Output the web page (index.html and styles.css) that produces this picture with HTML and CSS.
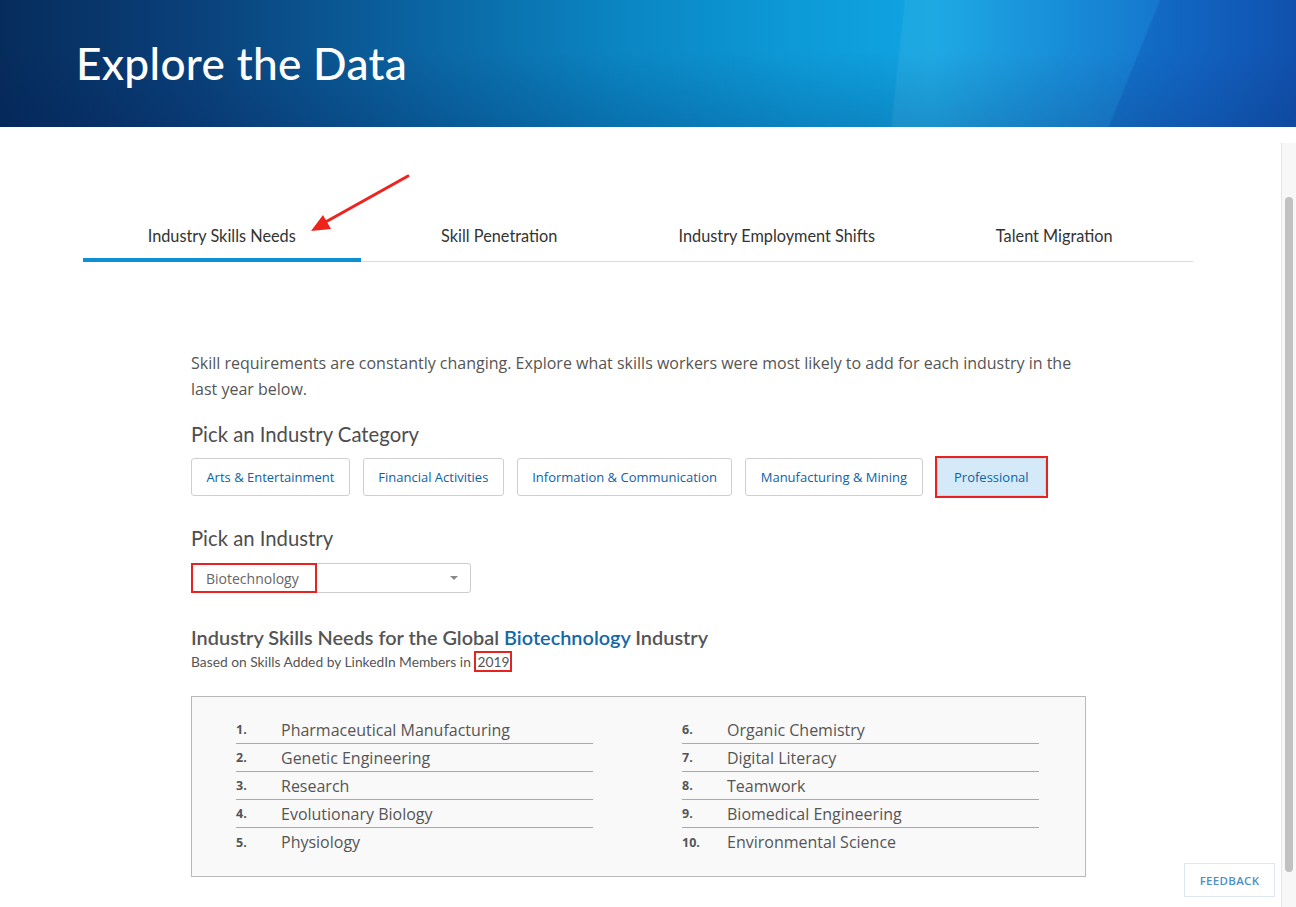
FILE: index.html
```html
<!DOCTYPE html>
<html lang="en">
<head>
<meta charset="utf-8">
<title>Explore the Data</title>
<link rel="stylesheet" href="styles.css">
</head>
<body>
<header class="hero">
  <h1 class="hero-title">Explore the Data</h1>
</header>

<main class="page">
  <nav class="tabs">
    <div class="tab active">Industry Skills Needs</div>
    <div class="tab">Skill Penetration</div>
    <div class="tab">Industry Employment Shifts</div>
    <div class="tab">Talent Migration</div>
  </nav>

  <section class="content">
    <p class="intro">Skill requirements are constantly changing. Explore what skills workers were most likely to add for each industry in the last year below.</p>

    <h2 class="label">Pick an Industry Category</h2>
    <div class="cats">
      <button class="cat">Arts &amp; Entertainment</button>
      <button class="cat">Financial Activities</button>
      <button class="cat">Information &amp; Communication</button>
      <button class="cat">Manufacturing &amp; Mining</button>
      <span class="mark"><button class="cat selected">Professional</button></span>
    </div>

    <h2 class="label label-industry">Pick an Industry</h2>
    <div class="select">
      <span class="select-value">Biotechnology</span>
      <span class="caret"></span>
    </div>

    <h3 class="result-title">Industry Skills Needs for the Global <span class="accent">Biotechnology</span> Industry</h3>
    <div class="result-sub">Based on Skills Added by LinkedIn Members in <span class="boxed">2019</span></div>

    <div class="skills">
      <ol class="skill-list">
        <li><span class="num">1.</span><span class="name">Pharmaceutical Manufacturing</span></li>
        <li><span class="num">2.</span><span class="name">Genetic Engineering</span></li>
        <li><span class="num">3.</span><span class="name">Research</span></li>
        <li><span class="num">4.</span><span class="name">Evolutionary Biology</span></li>
        <li><span class="num">5.</span><span class="name">Physiology</span></li>
      </ol>
      <ol class="skill-list">
        <li><span class="num">6.</span><span class="name">Organic Chemistry</span></li>
        <li><span class="num">7.</span><span class="name">Digital Literacy</span></li>
        <li><span class="num">8.</span><span class="name">Teamwork</span></li>
        <li><span class="num">9.</span><span class="name">Biomedical Engineering</span></li>
        <li><span class="num">10.</span><span class="name">Environmental Science</span></li>
      </ol>
    </div>
  </section>
</main>

<svg class="arrow" width="1296" height="907" viewBox="0 0 1296 907" aria-hidden="true">
  <line x1="408" y1="176" x2="322" y2="224" stroke="#f0231c" stroke-width="3" stroke-linecap="round"/>
  <polygon points="311,231 331,229 323,215" fill="#f0231c"/>
</svg>

<div class="scrollbar"><div class="thumb"></div></div>
<button class="feedback">FEEDBACK</button>
</body>
</html>
```

FILE: styles.css
```css
* { box-sizing: border-box; }

html, body {
  margin: 0;
  padding: 0;
  width: 1296px;
  height: 907px;
  overflow: hidden;
  background: #ffffff;
}

body {
  font-family: "Open Sans", "Liberation Sans", sans-serif;
  color: #555;
  position: relative;
}

.hero {
  height: 127px;
  display: flex;
  align-items: center;
  padding-left: 76px;
  background:
    linear-gradient(112deg, rgba(255,255,255,0) 0%, rgba(255,255,255,0) 86%, rgba(0,40,150,0.18) 86.2%, rgba(0,40,150,0.18) 100%),
    linear-gradient(96deg, rgba(255,255,255,0) 0%, rgba(255,255,255,0) 69%, rgba(255,255,255,0.06) 69.2%, rgba(255,255,255,0.06) 100%),
    linear-gradient(180deg, rgba(0,0,0,0) 40%, rgba(0,20,80,0.18) 100%),
    linear-gradient(90deg, #062c5c 0%, #0a3f78 14%, #0a5f9c 30%, #0a86c3 48%, #0d9bd8 62%, #10a4e2 72%, #0a86d6 82%, #0667c6 92%, #0450ad 100%);
}

.hero-title {
  margin: 0;
  margin-top: -2px;
  font-family: "Lato", "Open Sans", sans-serif;
  font-weight: 500;
  font-size: 44.2px;
  color: #ffffff;
  letter-spacing: 0.3px;
}

.page {
  padding: 85px 103px 0 83px;
}

.tabs {
  width: 1110px;
  display: grid;
  grid-template-columns: repeat(4, 1fr);
  border-bottom: 1px solid #dcdcdc;
}

.tab {
  font-family: "Lato", "Open Sans", sans-serif;
  font-size: 16.3px;
  line-height: 20px;
  color: #333;
  text-align: center;
  padding: 14px 0 12px;
  border-bottom: 4px solid transparent;
  margin-bottom: -1px;
}

.tab.active {
  border-bottom-color: #0e91d2;
}

.content {
  width: 895px;
  margin-left: 108px;
  padding-top: 88px;
}

.intro {
  margin: 0;
  font-size: 16px;
  line-height: 26px;
  color: #555;
}

.label {
  margin: 20px 0 0;
  font-family: "Lato", "Open Sans", sans-serif;
  font-weight: 400;
  font-size: 20.3px;
  line-height: 24px;
  color: #4d4d4d;
}

.label-industry {
  margin-top: 30px;
}

.cats {
  display: flex;
  gap: 13px;
  margin-top: 12px;
}

.cat {
  height: 38px;
  padding: 0 14.4px;
  background: #fff;
  border: 1px solid #cfcfcf;
  border-radius: 3px;
  font-family: "Open Sans", sans-serif;
  font-size: 13px;
  color: #0d62a3;
}

.mark {
  display: flex;
  border: 2px solid #e8231f;
  margin: -2px 0 -2px -1px;
}

.cat.selected {
  background: #d5eaf8;
  border-color: #c3d9e8;
  padding: 0 16.5px;
}

.select {
  margin-top: 13px;
  width: 280px;
  height: 30px;
  border: 1px solid #cccccc;
  border-radius: 3px;
  display: flex;
  align-items: center;
}

.select-value {
  width: 126px;
  height: 30px;
  margin: -1px 0 -1px -1px;
  border: 2px solid #e8231f;
  padding-left: 13px;
  display: flex;
  align-items: center;
  font-size: 14px;
  color: #666;
}

.caret {
  margin-left: auto;
  margin-right: 12px;
  width: 0;
  height: 0;
  border-left: 4px solid transparent;
  border-right: 4px solid transparent;
  border-top: 4px solid #888;
}

.result-title {
  margin: 32px 0 0;
  font-family: "Lato", "Open Sans", sans-serif;
  font-weight: 600;
  font-size: 19.9px;
  line-height: 24px;
  color: #555;
}

.accent {
  color: #1467a8;
}

.result-sub {
  margin-top: 4px;
  font-family: "Lato", "Open Sans", sans-serif;
  font-size: 13.8px;
  line-height: 18px;
  color: #555;
}

.boxed {
  border: 2px solid #e8231f;
  padding: 0 1px;
}

.skills {
  margin-top: 25px;
  border: 1px solid #b9b9b9;
  background: #f9f9f9;
  display: grid;
  grid-template-columns: 357px 357px;
  column-gap: 89px;
  padding: 19px 0 20px 44px;
}

.skill-list {
  list-style: none;
  margin: 0;
  padding: 0;
}

.skill-list li {
  display: flex;
  align-items: center;
  height: 28px;
  border-bottom: 1px solid #a9a9a9;
}

.skill-list li:last-child {
  border-bottom: none;
}

.num {
  width: 45px;
  font-size: 12.5px;
  font-weight: 700;
  color: #555;
}

.name {
  font-size: 16px;
  color: #555;
}

.arrow {
  position: absolute;
  top: 0;
  left: 0;
  pointer-events: none;
}

.scrollbar {
  position: absolute;
  left: 1281px;
  top: 143px;
  width: 15px;
  height: 764px;
  background: #f7f7f7;
  border-left: 1px solid #e4e4e4;
  padding: 54px 2px 0 3px;
}

.thumb {
  width: 8px;
  height: 675px;
  border-radius: 4px;
  background: #c1c1c1;
}

.feedback {
  position: absolute;
  left: 1184px;
  top: 863px;
  width: 91px;
  height: 34px;
  background: #fff;
  border: 1px solid #dbe8f3;
  font-family: "Open Sans", sans-serif;
  font-size: 11.5px;
  font-weight: 600;
  letter-spacing: 0.3px;
  color: #4b8fc8;
}
```
